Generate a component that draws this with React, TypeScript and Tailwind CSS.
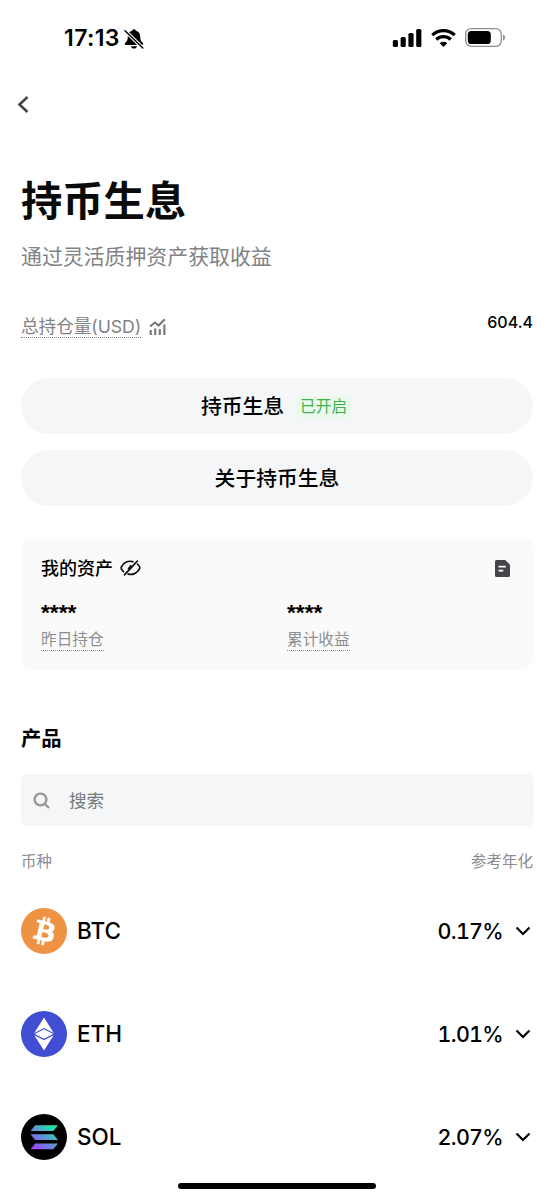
import type { ReactNode } from "react";

type Coin = {
  symbol: string;
  apr: string;
  icon: ReactNode;
};

function BtcIcon() {
  return (
    <svg width="46" height="46" viewBox="0 0 32 32">
      <circle cx="16" cy="16" r="16" fill="#ee9243" />
      <path
        fill="#fff"
        stroke="#fff"
        strokeWidth="0.2"
        d="M23.19 14.02c.314-2.096-1.283-3.223-3.465-3.975l.708-2.84-1.728-.43-.69 2.765c-.454-.114-.92-.22-1.385-.326l.695-2.783L15.596 6l-.708 2.839c-.376-.086-.746-.17-1.104-.26l.002-.009-2.384-.595-.46 1.846s1.283.294 1.256.312c.7.175.826.638.805 1.006l-.806 3.235c.048.012.11.03.18.057l-.183-.045-1.13 4.532c-.086.212-.303.531-.793.41.018.025-1.256-.313-1.256-.313l-.858 1.978 2.25.561c.418.105.828.215 1.231.318l-.715 2.872 1.727.43.708-2.84c.472.127.93.245 1.378.357l-.706 2.828 1.728.43.715-2.866c2.948.558 5.164.333 6.097-2.333.752-2.146-.037-3.385-1.588-4.192 1.13-.26 1.98-1.003 2.207-2.538zm-3.95 5.538c-.533 2.147-4.148.986-5.32.695l.95-3.805c1.172.293 4.929.872 4.37 3.11zm.535-5.569c-.487 1.953-3.495.96-4.47.717l.86-3.45c.975.243 4.118.696 3.61 2.733z"
      />
    </svg>
  );
}

function EthIcon() {
  return (
    <svg width="46" height="46" viewBox="0 0 46 46">
      <circle cx="23" cy="23" r="23" fill="#414ed3" />
      <path fill="#fff" d="M23 6.500 32.700 22 23 17 13.300 22Z" />
      <path fill="#fff" d="M23 18.300 32.200 23 23 27.800 13.800 23Z" />
      <path fill="#fff" d="M13.300 24.300 23 29.300 32.700 24.300 23 39.500Z" />
    </svg>
  );
}

function SolIcon() {
  return (
    <svg width="46" height="46" viewBox="0 0 46 46">
      <defs>
        <linearGradient id="sol" x1="12" y1="36" x2="34" y2="10" gradientUnits="userSpaceOnUse">
          <stop offset="0.1" stopColor="#9a49fb" />
          <stop offset="0.5" stopColor="#5b95d5" />
          <stop offset="0.9" stopColor="#1fe9a6" />
        </linearGradient>
      </defs>
      <circle cx="23" cy="23" r="23" fill="#000" />
      <g fill="url(#sol)">
        <path d="M14.2 11.3H37L32.3 17H9.5Z" />
        <path d="M9.5 20.3H32.3L37 26H14.2Z" />
        <path d="M14.2 29.5H37L32.3 35.3H9.5Z" />
      </g>
    </svg>
  );
}

const coins: Coin[] = [
  { symbol: "BTC", apr: "0.17%", icon: <BtcIcon /> },
  { symbol: "ETH", apr: "1.01%", icon: <EthIcon /> },
  { symbol: "SOL", apr: "2.07%", icon: <SolIcon /> },
];

function StatusBar() {
  return (
    <div className="flex h-[75px] items-center justify-between pl-16 pr-12">
      <div className="flex items-center gap-1 pt-0.5">
        <span className="text-[23px] font-semibold tracking-[0.4px]">17:13</span>
        <svg width="20" height="20" viewBox="0 0 20 20">
          <path
            d="M10 .3c-1 0-1.800.6-1.800 1.500C5.300 2.500 3.800 4.700 3.800 7.500c0 3.700-1 4.900-2.500 6.300-.9.900-.6 2.200.7 2.200h16c1.300 0 1.600-1.300.7-2.200-1.500-1.400-2.500-2.600-2.500-6.300 0-2.800-1.500-5-4.400-5.700C11.800.9 11 .3 10 .3ZM7 17.200h6c-.3 1.500-1.400 2.300-3 2.300s-2.700-.8-3-2.300Z"
            fill="#000"
          />
          <path d="M.8 1.500 18.800 19" stroke="#fff" strokeWidth="3.600" />
          <path d="M1 1.700 18.800 19" stroke="#000" strokeWidth="1.500" strokeLinecap="round" />
        </svg>
      </div>
      <div className="flex items-center gap-[9px]">
        <svg width="30" height="18" viewBox="0 0 30 18">
          <rect x="0.800" y="11" width="5.200" height="7" rx="1.500" />
          <rect x="8.600" y="8" width="5.200" height="10" rx="1.500" />
          <rect x="16.400" y="4" width="5.200" height="14" rx="1.500" />
          <rect x="24.200" y="0" width="5.200" height="18" rx="1.500" />
        </svg>
        <svg width="25" height="18" viewBox="0 0 25 18">
          <path d="M12.500 18 8.700 14.300a5.600 5.600 0 0 1 7.600 0Z" />
          <path
            d="M1.300 6.100a16.200 16.200 0 0 1 22.400 0M5.300 10.500a10.600 10.600 0 0 1 14.400 0"
            fill="none"
            stroke="#000"
            strokeWidth="3.300"
          />
        </svg>
        <svg width="41" height="19" viewBox="0 0 41 19">
          <rect x="0.700" y="0.700" width="35.600" height="17.600" rx="5.500" fill="#fff" stroke="#8e8e8e" strokeWidth="1.300" />
          <rect x="2.800" y="3" width="23" height="13" rx="3.600" />
          <path d="M38 6.500c1.500.5 2 1.600 2 3s-.5 2.500-2 3Z" fill="#8e8e8e" />
        </svg>
      </div>
    </div>
  );
}

function CoinRow({ coin }: { coin: Coin }) {
  return (
    <div className="flex h-[103px] items-center justify-between">
      <div className="flex items-center gap-2.5">
        {coin.icon}
        <span className="text-[22.500px] font-medium">{coin.symbol}</span>
      </div>
      <div className="flex items-center gap-3 pr-0.5 pt-px">
        <span className="text-[21.500px] font-medium tabular-nums tracking-[-0.7px]">{coin.apr}</span>
        <svg width="16" height="10" viewBox="0 0 16 10" fill="none" stroke="#000" strokeWidth="2.200">
          <path d="M1.500 1.500 8 8 14.500 1.500" />
        </svg>
      </div>
    </div>
  );
}

export default function App() {
  return (
    <div className="flex h-[1200px] w-[554px] flex-col overflow-hidden bg-white font-[Inter,'Noto_Sans_CJK_SC',sans-serif] text-black">
      <StatusBar />

      <header className="flex h-[59px] items-center pl-[17px]">
        <svg width="12" height="17" viewBox="0 0 12 17" fill="none" stroke="#444649" strokeWidth="2.600">
          <path d="M10.500 1 2.500 8.500 10.500 16" />
        </svg>
      </header>

      <main className="flex flex-col px-[21px]">
        <h1 className="mt-[37px] h-[60px] text-[41.300px] font-bold leading-[60px] text-[#0a0a0a]">持币生息</h1>
        <p className="mt-[11px] h-[30px] text-[20.900px] leading-[30px] text-[#818386]">
          通过灵活质押资产获取收益
        </p>

        <div className="mt-[38px] flex h-8 justify-between">
          <div className="flex items-center gap-2">
            <span className="h-6 border-b border-dotted border-[#808285] text-[17.700px] leading-[25px] tracking-[-0.1px] text-[#808285]">
              总持仓量(USD)
            </span>
            <svg width="17" height="17" viewBox="0 0 17 17" fill="none" stroke="#74777a" strokeWidth="2.100">
              <path d="M1 8.500 6 4.500 9.500 7.500 15.800 1.200M1.700 12v5M6.200 10.500v6.500M10.800 11v6M15.400 6.500v10.500" />
            </svg>
          </div>
          <span className="h-6 text-[16px] font-medium leading-6">604.4</span>
        </div>

        <div className="mt-9 flex flex-col gap-4">
          <button className="flex h-14 items-center justify-center gap-3 rounded-full bg-[#f4f6f8] pr-[2px] pt-0.5 text-[20.800px] font-medium">
            持币生息
            <span className="h-[22px] rounded-sm bg-[#e9faed] px-1 text-[15.700px] font-normal leading-[21px] text-[#43b14b]">
              已开启
            </span>
          </button>
          <button className="h-14 rounded-full bg-[#f4f6f8] pt-0.5 text-[20.800px] font-medium">关于持币生息</button>
        </div>

        <section className="mt-[31px] h-[133px] rounded-xl bg-[#fafafa] px-5 pt-[18px]">
          <div className="flex h-[26px] items-center justify-between">
            <div className="flex items-center gap-[7px]">
              <h2 className="text-[18px] font-medium">我的资产</h2>
              <svg width="21" height="16" viewBox="0 0 21 16" fill="none" stroke="#111" strokeWidth="1.700">
                <path d="M13.600 1.900C8.500.1 3.500 2.300 1.400 6.800c-.4.900-.3 1.600.2 2.500.6 1.100 1.400 2 2.400 2.800M17 3.900c1 .7 1.800 1.600 2.500 2.700.4.800.4 1.500 0 2.300-2.200 4.400-7 6.500-12 5" />
                <path d="M17.800.7 4 15.400" />
                <path d="M11.500 5.500 8.500 9.500" strokeWidth="2.600" />
              </svg>
            </div>
            <svg className="mr-[3px]" width="15" height="17" viewBox="0 0 15 17">
              <path d="M1.500 0H10.200L15 4.800V15.500Q15 17 13.500 17H1.500Q0 17 0 15.500V1.500Q0 0 1.500 0Z" fill="#444549" />
              <path d="M3.500 6.700H10.800M3.500 10.700H8.300" stroke="#fff" strokeWidth="1.700" />
            </svg>
          </div>
          <div className="mt-[17px] grid grid-cols-[246px_1fr]">
            <div>
              <div className="h-[28px] font-['Liberation_Sans',sans-serif] text-[22.800px] font-bold leading-[29px]">****</div>
              <span className="mt-[1px] inline-block h-[24px] border-b border-dotted border-[#8c8e90] text-[15.700px] leading-[26px] text-[#8c8e90]">
                昨日持仓
              </span>
            </div>
            <div>
              <div className="h-[28px] font-['Liberation_Sans',sans-serif] text-[22.800px] font-bold leading-[29px]">****</div>
              <span className="mt-[1px] inline-block h-[24px] border-b border-dotted border-[#8c8e90] text-[15.700px] leading-[26px] text-[#8c8e90]">
                累计收益
              </span>
            </div>
          </div>
        </section>

        <h2 className="mt-[54px] h-[30px] text-[20.300px] font-bold leading-[30px]">产品</h2>
        <div className="-mr-px mt-5 flex h-[52px] items-center gap-[19px] rounded-md bg-[#f4f6f8] pl-3">
          <svg width="17" height="17" viewBox="0 0 17 17" fill="none" stroke="#96989a" strokeWidth="2.400">
            <circle cx="7.500" cy="7.500" r="5.900" />
            <path d="M11.800 11.800 16 16" />
          </svg>
          <span className="pt-0.5 text-[17.600px] text-[#77797c]">搜索</span>
        </div>

        <div className="mt-6 flex h-6 items-center justify-between text-[15.500px] text-[#8a8c8e]">
          <span>币种</span>
          <span>参考年化</span>
        </div>

        <div className="mt-[5px]">
          {coins.map((coin) => (
            <CoinRow key={coin.symbol} coin={coin} />
          ))}
        </div>
      </main>

      <div className="mx-auto -mt-[5px] h-1.5 w-[198px] shrink-0 rounded-full bg-black" />
    </div>
  );
}
